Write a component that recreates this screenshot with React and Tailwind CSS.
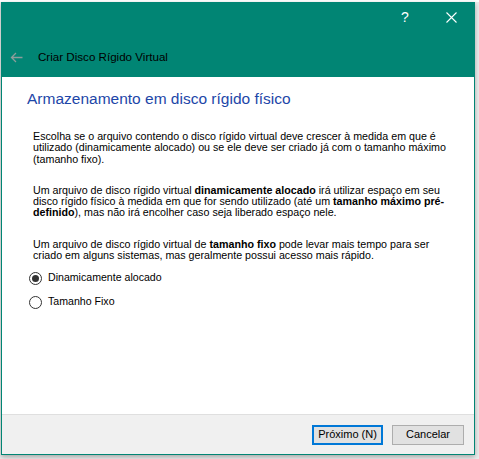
import React, { useState } from "react";

const font = { fontFamily: '"Liberation Sans", Arial, sans-serif' };

const Radio = ({ checked, label, onClick }) => (
  <div className="flex items-center h-[16px] cursor-default" onClick={onClick}>
    <div className="w-[13px] h-[13px] rounded-full border border-[#333333] bg-white flex items-center justify-center">
      {checked && <div className="w-[7px] h-[7px] rounded-full bg-[#333333]" />}
    </div>
    <span className="ml-[6px] text-[10.6px] text-black">{label}</span>
  </div>
);

const App = () => {
  const [mode, setMode] = useState("dynamic");

  return (
    <div
      className="w-[479px] h-[459px] bg-[#ececec] overflow-hidden flex flex-col"
      style={font}
    >
      <div className="h-[2px] bg-white shrink-0" />
      <div className="pl-[1px]">
        <div className="w-[474px] h-[453px] border border-[#018574] bg-white flex flex-col shadow-[0_2px_5px_rgba(0,0,0,0.3)]">
          {/* title bar */}
          <div className="h-[74px] bg-[#018574] shrink-0 flex flex-col">
            <div className="h-[29px] flex justify-end">
              <div className="w-[46px] h-full flex items-center justify-center text-white text-[14px]">
                ?
              </div>
              <div className="w-[46px] h-full flex items-center justify-center">
                <svg width="11" height="11" viewBox="0 0 11 11">
                  <path d="M0.5 0.5 L10.5 10.5 M10.5 0.5 L0.5 10.5" stroke="#ffffff" strokeWidth="1.1" />
                </svg>
              </div>
            </div>
            <div className="h-[32px] mt-[9px] flex items-center">
              <div className="ml-[8px] w-[14px] flex items-center">
                <svg width="13" height="11" viewBox="0 0 13 11">
                  <path d="M12.5 5.5 H1.5 M6 1 L1.5 5.5 L6 10" stroke="#8c9d9a" strokeWidth="1.3" fill="none" />
                </svg>
              </div>
              <span className="ml-[14px] text-[11.6px] text-black">Criar Disco Rígido Virtual</span>
            </div>
          </div>

          {/* content */}
          <div className="flex-1 pt-[12px] pl-[25px]">
            <div className="text-[15.5px] leading-[20px] text-[#1d46a8]">
              Armazenamento em disco rígido físico
            </div>
            <div className="pl-[6px] text-[10.7px] leading-[11.3px] text-black whitespace-nowrap">
              <p className="mt-[22px]">
                <span className="block">Escolha se o arquivo contendo o disco rígido virtual deve crescer à medida em que é</span>
                <span className="block">utilizado (dinamicamente alocado) ou se ele deve ser criado já com o tamanho máximo</span>
                <span className="block">(tamanho fixo).</span>
              </p>
              <p className="mt-[20px]">
                <span className="block">
                  Um arquivo de disco rígido virtual <b>dinamicamente alocado</b> irá utilizar espaço em seu
                </span>
                <span className="block">
                  disco rígido físico à medida em que for sendo utilizado (até um <b>tamanho máximo pré-</b>
                </span>
                <span className="block">
                  <b>definido</b>), mas não irá encolher caso seja liberado espaço nele.
                </span>
              </p>
              <p className="mt-[20px]">
                <span className="block">
                  Um arquivo de disco rígido virtual de <b>tamanho fixo</b> pode levar mais tempo para ser
                </span>
                <span className="block">criado em alguns sistemas, mas geralmente possui acesso mais rápido.</span>
              </p>
            </div>
            <div className="pl-[2px] mt-[9px] flex flex-col gap-[8px]">
              <Radio
                checked={mode === "dynamic"}
                label="Dinamicamente alocado"
                onClick={() => setMode("dynamic")}
              />
              <Radio
                checked={mode === "fixed"}
                label="Tamanho Fixo"
                onClick={() => setMode("fixed")}
              />
            </div>
          </div>

          {/* footer */}
          <div className="h-[40px] shrink-0 bg-[#f0f0f0] border-t border-[#dfdfdf] flex items-center justify-end gap-[9px] pr-[10px]">
            <button className="w-[71px] h-[20px] bg-[#e1e1e1] border-2 border-[#0078d7] text-[11px] text-black flex items-center justify-center">
              Próximo (N)
            </button>
            <button className="w-[72px] h-[20px] bg-[#e1e1e1] border border-[#adadad] text-[11px] text-black flex items-center justify-center">
              Cancelar
            </button>
          </div>
        </div>
      </div>
    </div>
  );
};

export default App;
